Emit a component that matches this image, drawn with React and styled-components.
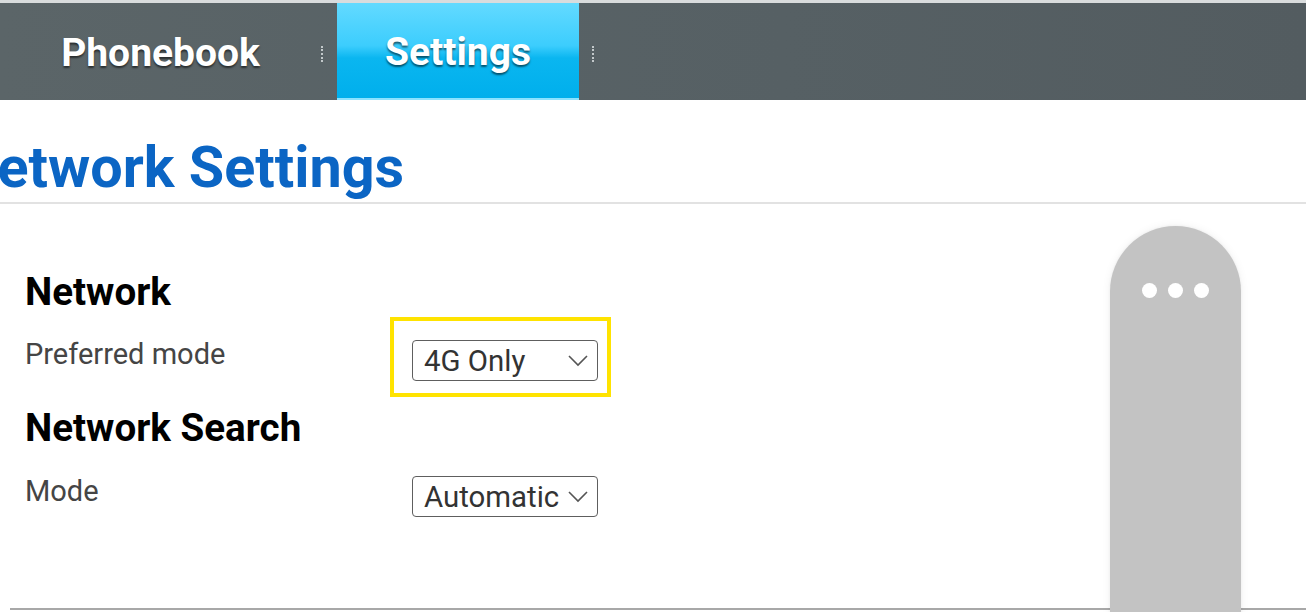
import React from "react";
import styled, { createGlobalStyle } from "styled-components";

const GlobalStyle = createGlobalStyle`
  html, body {
    margin: 0;
    padding: 0;
    background: #fff;
  }
  body {
    width: 1306px;
    height: 612px;
    overflow: hidden;
    font-family: Roboto, "Liberation Sans", Arial, sans-serif;
  }
`;

const Page = styled.div`
  position: relative;
  width: 1306px;
  height: 612px;
  overflow: hidden;
  background: #fff;
`;

const TopBar = styled.div`
  display: flex;
  align-items: stretch;
  height: 97px;
  border-top: 3px solid #d9dcdd;
  background: linear-gradient(90deg, #5b6568 0%, #566064 60%, #535c60 100%);
`;

const Tab = styled.div`
  width: ${({ $width }) => $width}px;
  display: flex;
  align-items: center;
  justify-content: center;
  padding-top: 3px;
  box-sizing: border-box;
  font-size: 39px;
  font-weight: 700;
  color: #fff;
  text-shadow: 0 2px 2px rgba(0, 0, 0, 0.55);
  background: ${({ $active }) =>
    $active
      ? "linear-gradient(180deg, #63daff 0%, #3ccdfd 45%, #0ab6f0 58%, #00afec 100%)"
      : "transparent"};
  border-bottom: ${({ $active }) => ($active ? "2px solid #8be3ff" : "none")};
`;

const Separator = styled.div`
  width: ${({ $width }) => $width}px;
  display: flex;
  align-items: center;
  justify-content: ${({ $align }) => $align || "flex-start"};
  padding-top: 4px;

  &::before {
    content: "";
    display: block;
    height: 16px;
    border-left: 2px dotted rgba(230, 235, 236, 0.75);
  }
`;

const TitleBar = styled.div`
  height: 102px;
  border-bottom: 2px solid #e2e2e2;
  display: flex;
  align-items: flex-end;
`;

const PageTitle = styled.h1`
  margin: 0 0 6px -43px;
  font-size: 57.5px;
  font-weight: 700;
  line-height: 1;
  color: #0b65c4;
  white-space: nowrap;
`;

const Content = styled.div`
  padding: 66px 0 0 25px;
  display: flex;
  flex-direction: column;
`;

const SectionTitle = styled.h2`
  margin: ${({ $top }) => $top || 0}px 0 0 0;
  font-size: 38.6px;
  font-weight: 700;
  line-height: 44px;
  color: #000;
`;

const Row = styled.div`
  display: grid;
  grid-template-columns: 387px 186px;
  align-items: start;
  margin-top: ${({ $top }) => $top}px;
`;

const Label = styled.div`
  font-size: 29px;
  color: #454545;
  line-height: 34px;
`;

const SelectCell = styled.div`
  position: relative;
  margin-top: ${({ $top }) => $top || 0}px;
`;

const Highlight = styled.div`
  position: absolute;
  top: -23px;
  left: -22px;
  right: -13px;
  bottom: -16px;
  border: 4px solid #ffe300;
  pointer-events: none;
`;

const SelectBox = styled.div`
  height: 41px;
  box-sizing: border-box;
  border: 1.5px solid #5e5e5e;
  border-radius: 4px;
  display: flex;
  align-items: center;
  justify-content: space-between;
  padding: 0 9px 0 11px;
  font-size: 29.4px;
  color: #333;
  background: #fff;
`;

const Handle = styled.div`
  position: absolute;
  left: 1110px;
  top: 226px;
  width: 131px;
  height: 420px;
  border-radius: 66px 66px 0 0;
  background: #c3c3c3;
  box-shadow: 0 0 10px rgba(0, 0, 0, 0.06), 0 0 3px rgba(0, 0, 0, 0.06);
  display: flex;
  justify-content: center;
  gap: 11px;
  padding-top: 57px;
  box-sizing: border-box;
`;

const Dot = styled.span`
  width: 15px;
  height: 15px;
  border-radius: 50%;
  background: #fff;
`;

const BottomRule = styled.div`
  position: absolute;
  left: 10px;
  right: 0;
  top: 608px;
  height: 2px;
  background: #a8a8a8;
`;

const Chevron = () => (
  <svg width="20" height="12" viewBox="0 0 20 12" fill="none">
    <polyline points="1,1 10,10 19,1" stroke="#555" strokeWidth="1.6" />
  </svg>
);

const Select = ({ value }) => (
  <SelectBox>
    <span>{value}</span>
    <Chevron />
  </SelectBox>
);

export default function App() {
  return (
    <Page>
      <GlobalStyle />
      <TopBar>
        <Tab $width={321}>Phonebook</Tab>
        <Separator $width={16} />
        <Tab $width={242} $active>
          Settings
        </Tab>
        <Separator $width={28} $align="center" />
      </TopBar>

      <TitleBar>
        <PageTitle>Network Settings</PageTitle>
      </TitleBar>

      <Content>
        <SectionTitle>Network</SectionTitle>
        <Row $top={23}>
          <Label>Preferred mode</Label>
          <SelectCell $top={3}>
            <Highlight />
            <Select value="4G Only" />
          </SelectCell>
        </Row>

        <SectionTitle $top={25}>Network Search</SectionTitle>
        <Row $top={24}>
          <Label>Mode</Label>
          <SelectCell $top={2}>
            <Select value="Automatic" />
          </SelectCell>
        </Row>
      </Content>

      <BottomRule />
      <Handle>
        <Dot />
        <Dot />
        <Dot />
      </Handle>
    </Page>
  );
}
